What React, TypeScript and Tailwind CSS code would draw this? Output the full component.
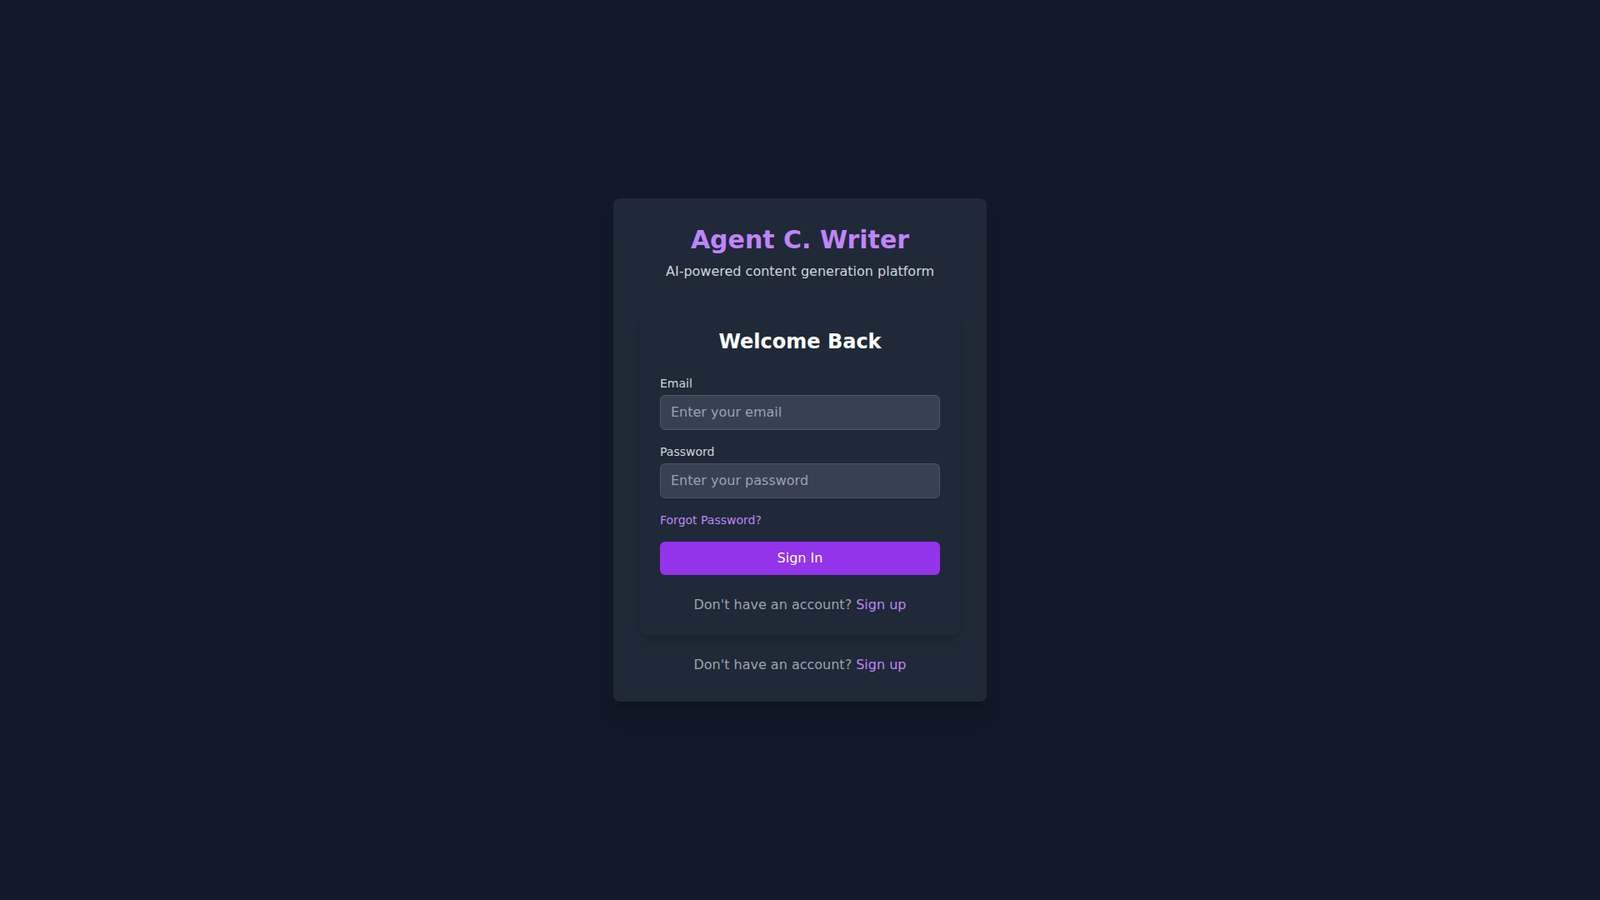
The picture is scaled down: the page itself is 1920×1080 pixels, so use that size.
export default function App() {
  return (
    <div className="min-h-screen bg-[#111827] flex items-center justify-center font-['DejaVu_Sans',sans-serif]">
      <div className="w-full max-w-md bg-[#1f2937] rounded-lg p-8 shadow-xl">
        {/* Header */}
        <div className="text-center mb-8">
          <h1 className="text-3xl font-bold text-[#c084fc]">Agent C. Writer</h1>
          <p className="mt-2 text-[#d1d5db]">AI-powered content generation platform</p>
        </div>

        {/* Login form */}
        <div className="bg-[#1f2937] rounded-lg shadow-lg p-6">
          <h2 className="text-2xl font-bold text-white text-center mb-6">Welcome Back</h2>
          <form className="space-y-4" onSubmit={(e) => e.preventDefault()}>
            <div>
              <label className="block text-sm text-[#d1d5db] mb-1">Email</label>
              <input
                type="email"
                placeholder="Enter your email"
                className="w-full px-3 py-2 bg-[#374151] border border-[#4b5563] rounded-md text-white placeholder-[#9ca3af] outline-none"
              />
            </div>
            <div>
              <label className="block text-sm text-[#d1d5db] mb-1">Password</label>
              <input
                type="password"
                placeholder="Enter your password"
                className="w-full px-3 py-2 bg-[#374151] border border-[#4b5563] rounded-md text-white placeholder-[#9ca3af] outline-none"
              />
            </div>
            <div className="text-sm">
              <a href="#" className="text-[#c084fc]">Forgot Password?</a>
            </div>
            <button type="submit" className="w-full py-2 bg-[#9333ea] text-white rounded-md">
              Sign In
            </button>
          </form>
          <p className="mt-6 text-center text-[#9ca3af]">
            Don't have an account? <a href="#" className="text-[#c084fc]">Sign up</a>
          </p>
        </div>

        <p className="mt-6 text-center text-[#9ca3af]">
          Don't have an account? <a href="#" className="text-[#c084fc]">Sign up</a>
        </p>
      </div>
    </div>
  );
}
